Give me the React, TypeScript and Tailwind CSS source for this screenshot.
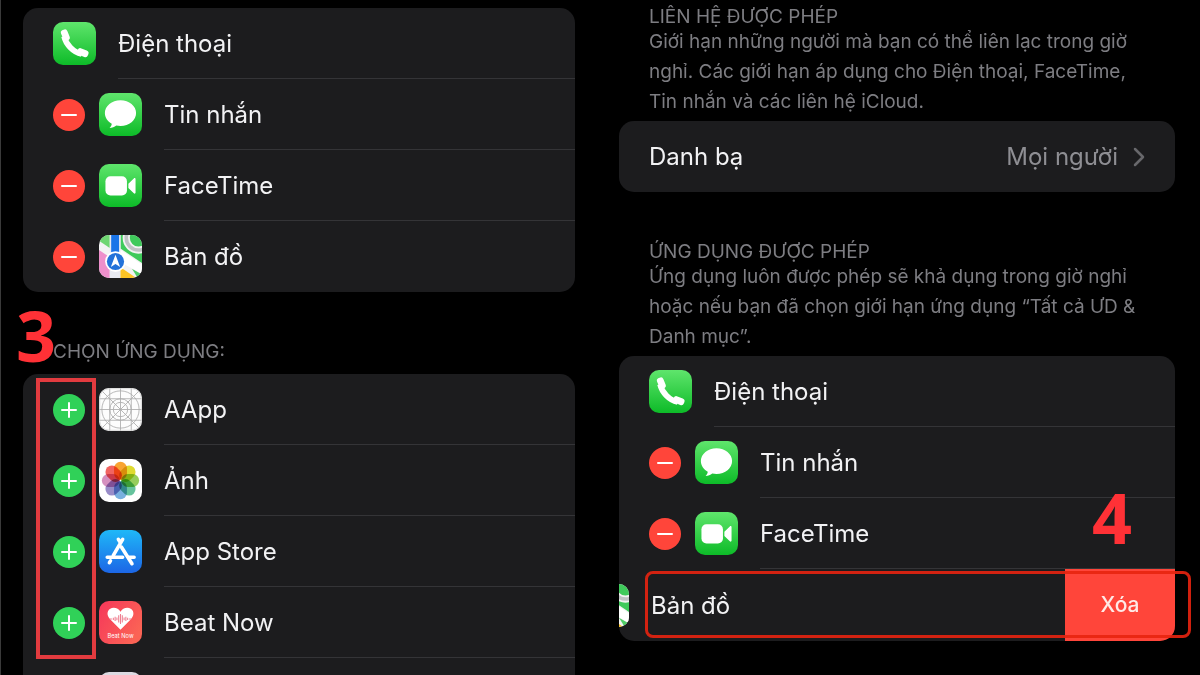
import { ReactNode } from 'react'

type IconProp = {
  children: ReactNode
}
type AppRowProp = {
  icon: ReactNode
  name: string
  action?: 'add' | 'remove'
}
type SectionTextProp = {
  title: string
  children: ReactNode
}

function IconFrame({ children }: IconProp) {
  return (
    <svg viewBox="0 0 60 60" className="size-[43px] shrink-0 rounded-[10px]" aria-hidden="true">
      {children}
    </svg>
  )
}

function GreenBack() {
  return (
    <>
      <defs>
        <linearGradient id="green" x1="0" y1="0" x2="0" y2="1">
          <stop offset="0" stopColor="#5fe56c" />
          <stop offset="1" stopColor="#0dbb28" />
        </linearGradient>
      </defs>
      <rect width="60" height="60" fill="url(#green)" />
    </>
  )
}

function PhoneIcon() {
  return (
    <IconFrame>
      <GreenBack />
      <path d="M15.500 20C18 31 28 42 40 44.500" fill="none" stroke="#fff" strokeWidth="8" />
      <rect x="12.500" y="10.500" width="9.500" height="16" rx="4" fill="#fff" transform="rotate(-22 17 18.500)" />
      <rect x="33.500" y="38" width="16" height="9.500" rx="4" fill="#fff" transform="rotate(22 41.500 43)" />
    </IconFrame>
  )
}

function MessageIcon() {
  return (
    <IconFrame>
      <GreenBack />
      <path
        fill="#fff"
        d="M30 10C17.800 10 8.200 18 8.200 28c0 6.300 3.800 11.800 9.600 15-.2 2.300-1.300 4.200-3 5.900 3.500-.2 6.800-1.400 9.300-3.500 1.900.4 3.900.6 5.900.6 12.200 0 21.800-8 21.800-18S42.200 10 30 10z"
      />
    </IconFrame>
  )
}

function FaceTimeIcon() {
  return (
    <IconFrame>
      <GreenBack />
      <rect x="9" y="17" width="30" height="27" rx="7" fill="#fff" />
      <path fill="#fff" d="M41 27.500l7.600-7.400c1-1 2.400-.5 2.400 1v18.800c0 1.500-1.400 2-2.400 1L41 33.500z" />
    </IconFrame>
  )
}

function MapsIcon() {
  return (
    <IconFrame>
      <rect width="60" height="60" fill="#f3f3f3" />
      <path d="M0 0h15v18L0 8z" fill="#6fd672" />
      <path d="M30 0h30v39L30 19z" fill="#3fca5b" />
      <circle cx="55" cy="4" r="17" fill="none" stroke="#f2f2f2" strokeWidth="10" />
      <circle cx="55" cy="4" r="17" fill="none" stroke="#bfc2c4" strokeWidth="5" />
      <path d="M0 21l15 10v29H0z" fill="#ee8fcb" />
      <path d="M15 0h15v60H15z" fill="#e8eaf2" />
      <path d="M17 0h11v30H17z" fill="#1a74e8" />
      <path d="M30 45l22 15H30z" fill="#fcc425" />
      <path d="M46 47l14 8v5h-6z" fill="#4fce66" />
      <path d="M30 21l30 20v13L30 38z" fill="#fff" />
      <circle cx="23" cy="37" r="14.500" fill="#fff" />
      <circle cx="23" cy="37" r="12" fill="#2372d9" />
      <path d="M23 27.500l6.500 17L23 40.500l-6.500 4z" fill="#fff" />
    </IconFrame>
  )
}

function GridIcon() {
  return (
    <IconFrame>
      <rect width="60" height="60" fill="#fdfdfd" />
      <g fill="none" stroke="#adadad" strokeWidth="1.200">
        <path d="M15 0v60M30 0v60M45 0v60M0 15h60M0 30h60M0 45h60M0 0l60 60M60 0L0 60" />
        <circle cx="30" cy="30" r="26" />
        <circle cx="30" cy="30" r="15" />
        <circle cx="30" cy="30" r="10" />
        <rect x="1" y="1" width="58" height="58" rx="13" stroke="#cfcfcf" />
      </g>
    </IconFrame>
  )
}

const petals = ['#f79a1c', '#dcd61b', '#8bc84a', '#55bd92', '#6aa7dc', '#8d80c2', '#d084b8', '#ef5350']

function PhotosIcon() {
  return (
    <IconFrame>
      <rect width="60" height="60" fill="#fff" />
      <g className="isolate">
        {petals.map((color, i) => (
          <rect
            key={color}
            x="21"
            y="4"
            width="18"
            height="25"
            rx="9"
            fill={color}
            fillOpacity="0.9"
            className="mix-blend-multiply"
            transform={`rotate(${i * 45} 30 30)`}
          />
        ))}
      </g>
    </IconFrame>
  )
}

function AppStoreIcon() {
  return (
    <IconFrame>
      <defs>
        <linearGradient id="store" x1="0" y1="0" x2="0" y2="1">
          <stop offset="0" stopColor="#1fb8f8" />
          <stop offset="1" stopColor="#1c66e6" />
        </linearGradient>
      </defs>
      <rect width="60" height="60" fill="url(#store)" />
      <g fill="none" stroke="#fff" strokeWidth="5" strokeLinecap="round">
        <path d="M33 13L20 35.500M27 13l3 5M31.500 24L46 47M16 43l-1.500 2.500" />
        <path d="M11.500 38H33M42 38h7" />
      </g>
    </IconFrame>
  )
}

function BeatNowIcon() {
  return (
    <IconFrame>
      <defs>
        <linearGradient id="beat" x1="0" y1="0" x2="1" y2="0.6">
          <stop offset="0" stopColor="#f5375a" />
          <stop offset="1" stopColor="#fb6355" />
        </linearGradient>
      </defs>
      <rect width="60" height="60" fill="url(#beat)" />
      <path
        fill="#fff"
        d="M30 40L15.500 25.500C8 17.500 13.500 9.500 20.500 9.500c4 0 7.500 2 9.500 5.500 2-3.500 5.500-5.500 9.500-5.500 7 0 12.500 8 5 16z"
      />
      <path
        d="M15 25h3M20 23.500v3M22.500 22v6M25 23v4M27.500 20v10M30 18v14M32.500 20v10M35 23v4M37.500 22v6M40 23.500v3M42 25h3"
        stroke="#ef7f90"
        strokeWidth="1.500"
      />
      <text x="30" y="51.500" textAnchor="middle" fill="#fff" fontSize="8" fontFamily="Inter, sans-serif">
        Beat Now
      </text>
    </IconFrame>
  )
}

function BlankIcon() {
  return (
    <IconFrame>
      <rect width="60" height="60" fill="#dcdae2" />
    </IconFrame>
  )
}

function RoundButton({ action, name }: { action: 'add' | 'remove'; name: string }) {
  const add = action === 'add'
  return (
    <button
      type="button"
      aria-label={`${add ? 'Thêm' : 'Xóa'} ${name}`}
      className={`mr-[14px] flex size-[32px] shrink-0 items-center justify-center rounded-full ${add ? 'bg-[#30d158]' : 'bg-[#ff453a]'}`}
    >
      <svg viewBox="0 0 32 32" className="size-full" stroke="#fff" strokeWidth="2" strokeLinecap="round">
        <path d={add ? 'M9 16h14M16 9v14' : 'M9 16h14'} />
      </svg>
    </button>
  )
}

function AppRow({ icon, name, action }: AppRowProp) {
  return (
    <li className="group flex h-[71px] items-center pl-[30px]">
      {action && <RoundButton action={action} name={name} />}
      {icon}
      <span className="ml-[22px] flex grow items-center self-stretch border-b border-[#343437] pt-[2px] group-last:border-transparent">
        {name}
      </span>
    </li>
  )
}

function SwipedRow({ icon, name }: AppRowProp) {
  return (
    <li className="flex h-[72px]">
      <div className="-ml-[110px] flex w-full shrink-0 items-center pl-[77px]">
        {icon}
        <span className="ml-[22px] pt-[2px]">{name}</span>
      </div>
      <button type="button" className="w-[110px] shrink-0 bg-[#ff453a] text-[21px] font-medium text-[#ffe9e6]">
        Xóa
      </button>
    </li>
  )
}

function AppList({ children }: IconProp) {
  return <ul className="overflow-hidden rounded-[15px] bg-[#1c1c1e]">{children}</ul>
}

function SectionText({ title, children }: SectionTextProp) {
  return (
    <div className="px-[30px] pb-[4px] text-[19px] text-[#7d7d82]">
      <h2 className="leading-[21px]">{title}</h2>
      <p className="leading-[30px]">{children}</p>
    </div>
  )
}

function ChooseColumn() {
  return (
    <section className="pt-[8px]">
      <AppList>
        <AppRow icon={<PhoneIcon />} name="Điện thoại" />
        <AppRow icon={<MessageIcon />} name="Tin nhắn" action="remove" />
        <AppRow icon={<FaceTimeIcon />} name="FaceTime" action="remove" />
        <AppRow icon={<MapsIcon />} name="Bản đồ" action="remove" />
      </AppList>
      <div className="relative">
        <h2 className="px-[30px] pt-[50px] pb-[12px] text-[19px] leading-[20px] text-[#7d7d82]">CHỌN ỨNG DỤNG:</h2>
        <span className="absolute -left-[7px] top-[8px] font-['Open_Sans',sans-serif] text-[70px] font-bold leading-[70px] text-[#ff3136]">
          3
        </span>
      </div>
      <div className="relative">
        <AppList>
          <AppRow icon={<GridIcon />} name="AApp" action="add" />
          <AppRow icon={<PhotosIcon />} name="Ảnh" action="add" />
          <AppRow icon={<AppStoreIcon />} name="App Store" action="add" />
          <AppRow icon={<BeatNowIcon />} name="Beat Now" action="add" />
          <AppRow icon={<BlankIcon />} name="" action="add" />
        </AppList>
        <div className="pointer-events-none absolute left-[13px] top-[4px] h-[281px] w-[60px] border-4 border-[#e23b3f]"></div>
      </div>
    </section>
  )
}

function AllowedColumn() {
  return (
    <section className="pt-[6px]">
      <SectionText title="LIÊN HỆ ĐƯỢC PHÉP">
        Giới hạn những người mà bạn có thể liên lạc trong giờ nghỉ. Các giới hạn áp dụng cho Điện thoại, FaceTime, Tin
        nhắn và các liên hệ iCloud.
      </SectionText>
      <button type="button" className="flex h-[71px] w-full items-center rounded-[15px] bg-[#1c1c1e] px-[30px]">
        <span className="grow text-left">Danh bạ</span>
        <span className="text-[#8e8e93]">Mọi người</span>
        <svg
          viewBox="0 0 12 20"
          className="ml-[15px] h-[20px] w-[12px]"
          fill="none"
          stroke="#68686c"
          strokeWidth="2.5"
          strokeLinecap="round"
          strokeLinejoin="round"
        >
          <path d="M2 2l8 8-8 8" />
        </svg>
      </button>
      <div className="pt-[49px]">
        <SectionText title="ỨNG DỤNG ĐƯỢC PHÉP">
          Ứng dụng luôn được phép sẽ khả dụng trong giờ nghỉ hoặc nếu bạn đã chọn giới hạn ứng dụng “Tất cả ƯD & Danh
          mục”.
        </SectionText>
      </div>
      <div className="relative">
        <AppList>
          <AppRow icon={<PhoneIcon />} name="Điện thoại" />
          <AppRow icon={<MessageIcon />} name="Tin nhắn" action="remove" />
          <AppRow icon={<FaceTimeIcon />} name="FaceTime" action="remove" />
          <SwipedRow icon={<MapsIcon />} name="Bản đồ" />
        </AppList>
        <span className="absolute right-[43px] top-[126px] font-['Open_Sans',sans-serif] text-[70px] font-bold leading-[70px] text-[#ff3136]">
          4
        </span>
        <div className="pointer-events-none absolute -right-[16px] bottom-[3px] left-[26px] h-[67px] rounded-[8px] border-3 border-[#e8240f]/90"></div>
      </div>
    </section>
  )
}

export default function App() {
  return (
    <main className="grid h-screen grid-cols-[552fr_556fr] gap-[44px] overflow-hidden border-l border-[#3a3a3a] bg-black pl-[22px] pr-[25px] font-['Inter',sans-serif] text-[24px] text-[#f2f2f4]">
      <ChooseColumn />
      <AllowedColumn />
    </main>
  )
}
